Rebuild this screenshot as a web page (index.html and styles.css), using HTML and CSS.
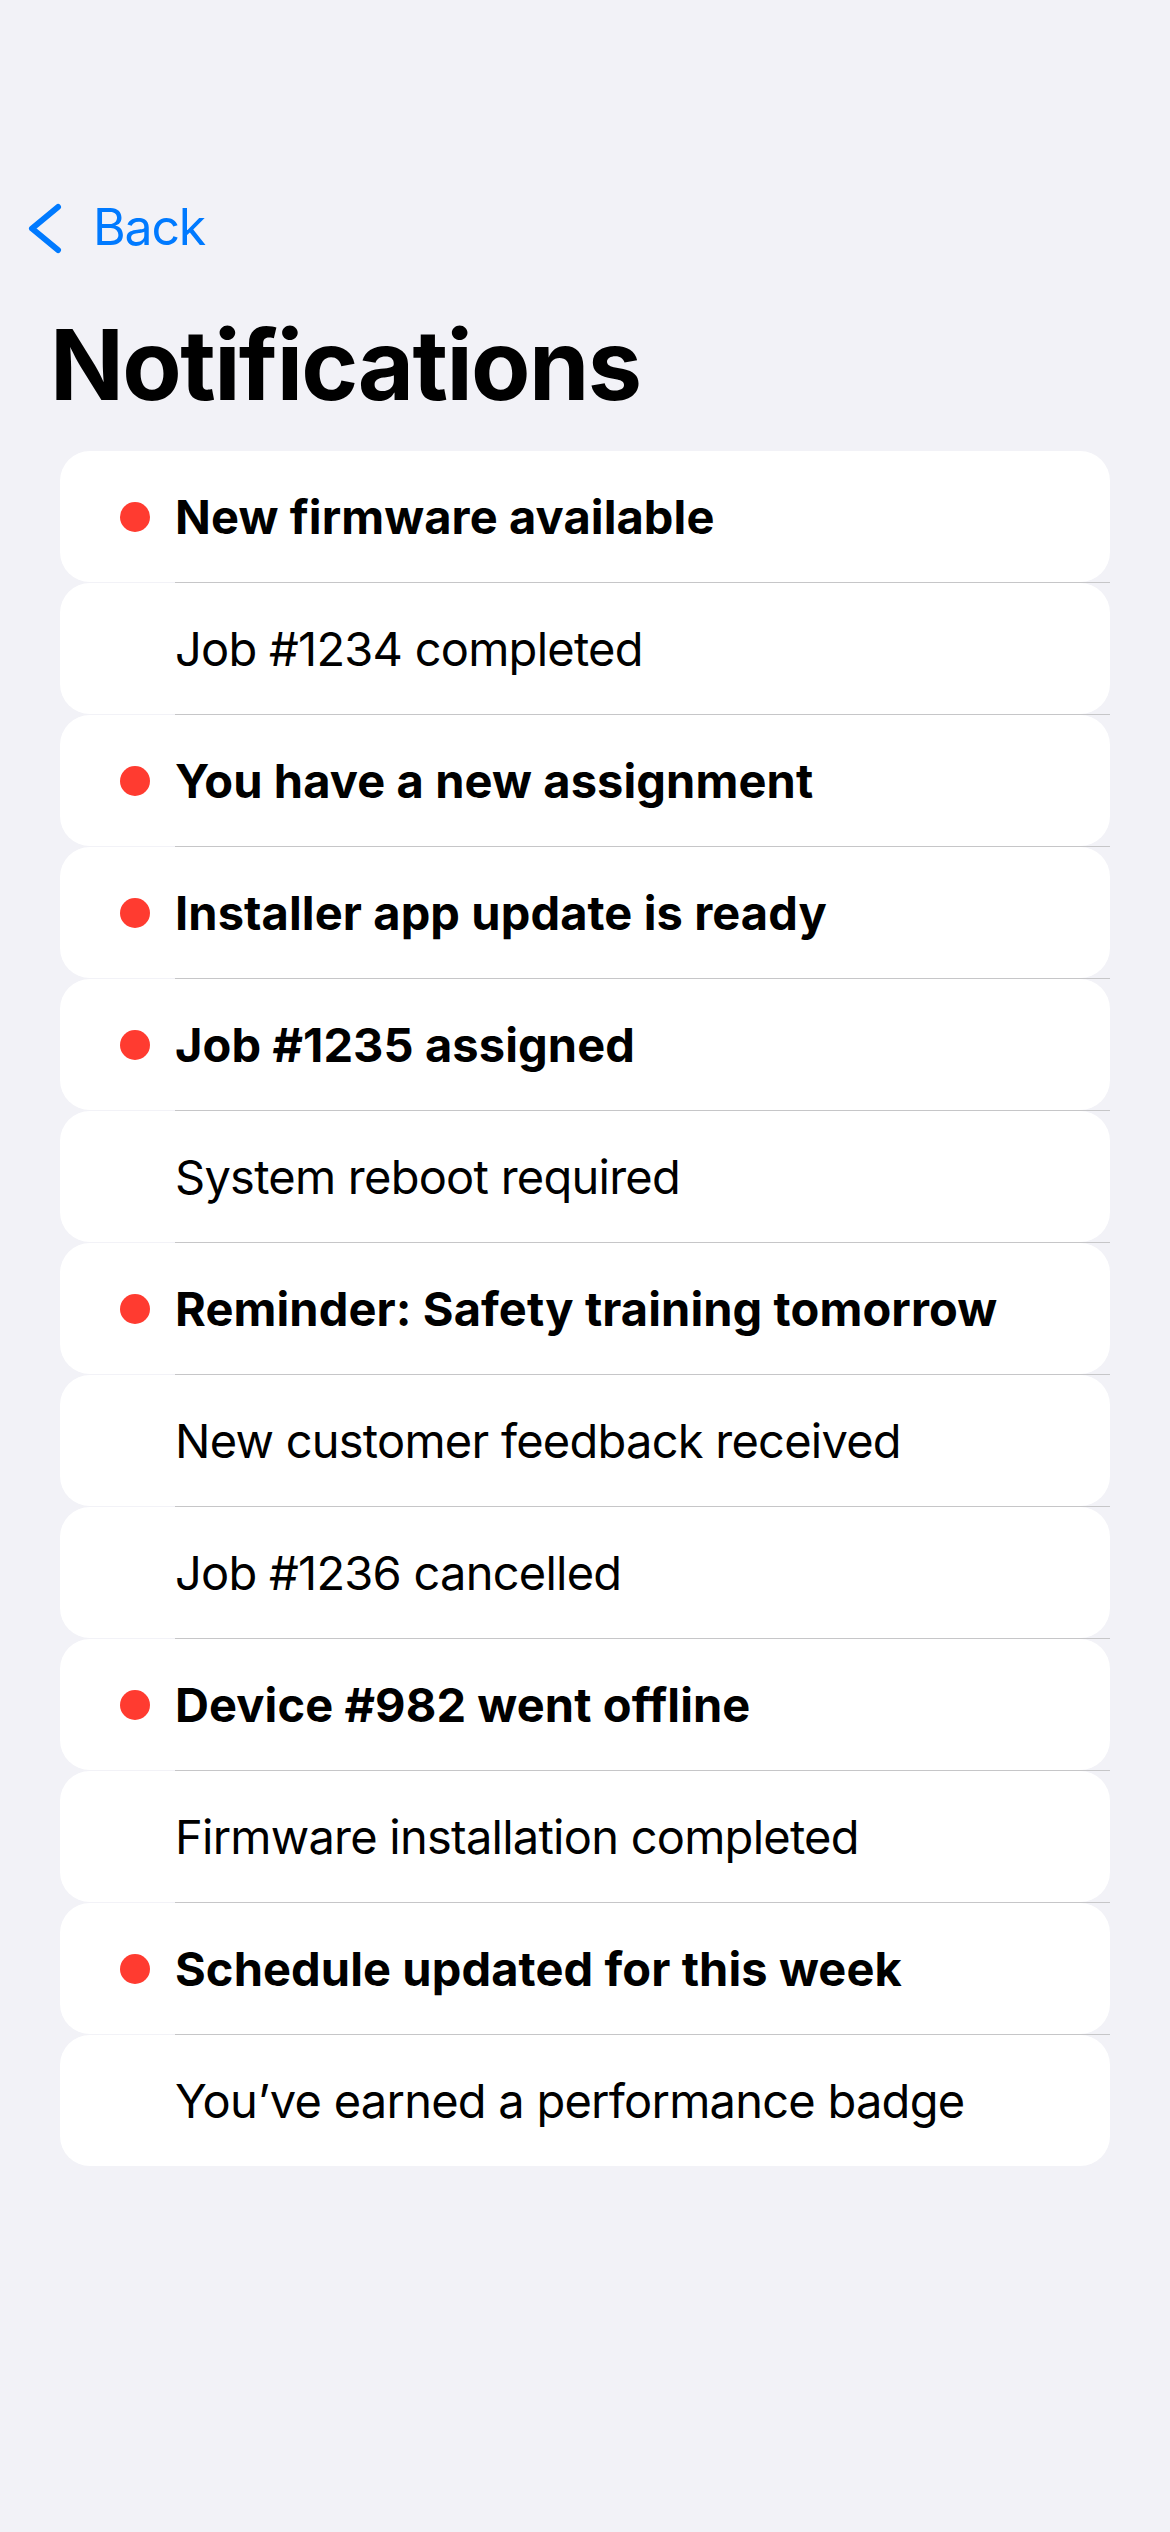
FILE: index.html
```html
<!DOCTYPE html>
<html lang="en">
<head>
<meta charset="utf-8">
<title>Notifications</title>
<link rel="stylesheet" href="styles.css">
</head>
<body>
<div class="screen">
  <nav class="nav">
    <a class="back" href="#">
      <svg class="chevron" width="40" height="60" viewBox="0 0 40 60" aria-hidden="true">
        <path d="M34 10 L8 31.5 L34 53" fill="none" stroke="#007AFF" stroke-width="6" stroke-linecap="round" stroke-linejoin="round"/>
      </svg>
      <span class="back-label">Back</span>
    </a>
  </nav>
  <h1 class="title">Notifications</h1>
  <ul class="list">
    <li class="item unread"><div class="card"><span class="dot"></span><span class="text">New firmware available</span></div><div class="sep"></div></li>
    <li class="item"><div class="card"><span class="dot"></span><span class="text">Job #1234 completed</span></div><div class="sep"></div></li>
    <li class="item unread"><div class="card"><span class="dot"></span><span class="text">You have a new assignment</span></div><div class="sep"></div></li>
    <li class="item unread"><div class="card"><span class="dot"></span><span class="text">Installer app update is ready</span></div><div class="sep"></div></li>
    <li class="item unread"><div class="card"><span class="dot"></span><span class="text">Job #1235 assigned</span></div><div class="sep"></div></li>
    <li class="item"><div class="card"><span class="dot"></span><span class="text">System reboot required</span></div><div class="sep"></div></li>
    <li class="item unread"><div class="card"><span class="dot"></span><span class="text">Reminder: Safety training tomorrow</span></div><div class="sep"></div></li>
    <li class="item"><div class="card"><span class="dot"></span><span class="text">New customer feedback received</span></div><div class="sep"></div></li>
    <li class="item"><div class="card"><span class="dot"></span><span class="text">Job #1236 cancelled</span></div><div class="sep"></div></li>
    <li class="item unread"><div class="card"><span class="dot"></span><span class="text">Device #982 went offline</span></div><div class="sep"></div></li>
    <li class="item"><div class="card"><span class="dot"></span><span class="text">Firmware installation completed</span></div><div class="sep"></div></li>
    <li class="item unread"><div class="card"><span class="dot"></span><span class="text">Schedule updated for this week</span></div><div class="sep"></div></li>
    <li class="item"><div class="card"><span class="dot"></span><span class="text">You’ve earned a performance badge</span></div></li>
  </ul>
</div>
</body>
</html>
```
FILE: styles.css
```css
html, body {
  margin: 0;
  padding: 0;
  background: #F2F2F7;
}
body {
  font-family: Inter, "Noto Sans", "Liberation Sans", sans-serif;
  color: #000;
  -webkit-font-smoothing: antialiased;
}
.screen {
  width: 1170px;
  min-height: 2532px;
  display: flex;
  flex-direction: column;
}
.nav {
  display: flex;
  align-items: center;
  padding: 197px 0 0 24px;
  height: 60px;
}
.back {
  display: flex;
  align-items: center;
  gap: 29px;
  color: #007AFF;
  text-decoration: none;
}
.chevron {
  display: block;
}
.back-label {
  font-size: 50px;
  line-height: 60px;
  font-weight: 400;
  letter-spacing: -1.2px;
}
.title {
  margin: 53px 0 0 50px;
  font-size: 97px;
  line-height: 110px;
  font-weight: 700;
  letter-spacing: -1.6px;
}
.list {
  list-style: none;
  margin: 31px 60px 0 60px;
  padding: 0;
  display: flex;
  flex-direction: column;
}
.card {
  height: 131px;
  background: #FFFFFF;
  border-radius: 30px;
  display: flex;
  align-items: center;
  padding-left: 60px;
}
.dot {
  width: 30px;
  height: 30px;
  border-radius: 50%;
  background: #FF3B30;
  margin-right: 25px;
  flex: none;
  visibility: hidden;
}
.unread .dot {
  visibility: visible;
}
.text {
  font-size: 47px;
  line-height: 56px;
  font-weight: 400;
  letter-spacing: -0.75px;
  white-space: nowrap;
}
.unread .text {
  font-weight: 700;
  letter-spacing: 0.1px;
}
.sep {
  height: 1px;
  margin-left: 115px;
  background: #C6C6C8;
}
```
